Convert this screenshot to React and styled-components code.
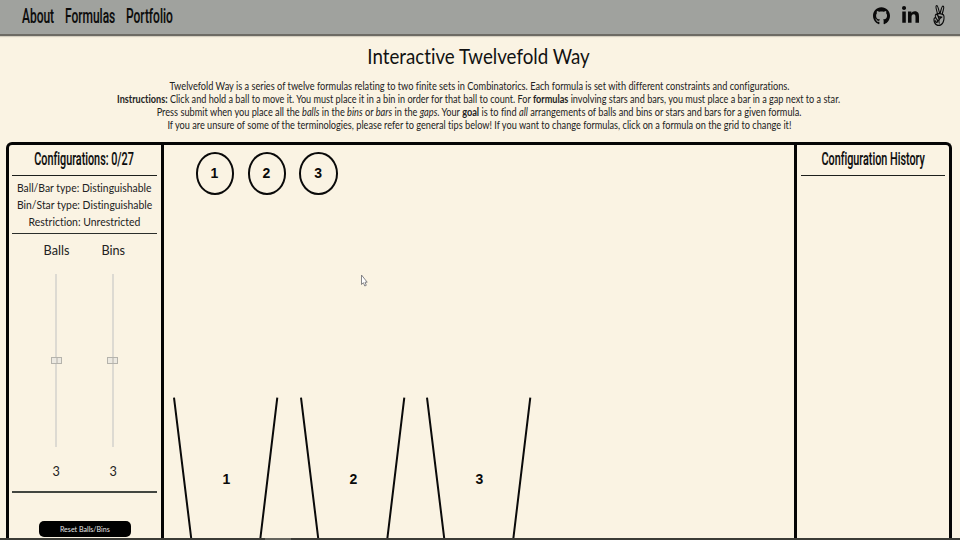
import React from "react";
import styled, { createGlobalStyle } from "styled-components";
import { FaGithub, FaLinkedinIn, FaAngellist } from "react-icons/fa";

const GlobalStyle = createGlobalStyle`
  * { box-sizing: border-box; }
  body { margin: 0; background: #faf3e3; overflow: hidden; }
`;

const Page = styled.div`
  width: 960px;
  height: 540px;
  overflow: hidden;
  display: flex;
  flex-direction: column;
  background: #faf3e3;
  color: #222;
  font-family: "Lato", sans-serif;
  font-variant-ligatures: none;
`;

const Header = styled.header`
  flex: none;
  height: 36px;
  display: flex;
  justify-content: space-between;
  padding: 0 14.5px 0 22px;
  background: #a0a29e;
  border-bottom: 2px solid #6d6b64;
  box-shadow: 0 1px 1px #d5cfc0;
`;

const Nav = styled.nav`
  display: flex;
  height: 34px;
  align-items: center;
`;

const NavItem = styled.a`
  width: ${(p) => p.$width}px;
  white-space: nowrap;
`;

const Condensed = styled.span`
  display: inline-block;
  font-family: "Roboto", sans-serif;
  font-weight: 500;
  font-size: ${(p) => p.$size}px;
  line-height: 22px;
  color: #0c0c0c;
  white-space: nowrap;
  transform: scaleX(0.614);
  transform-origin: ${(p) => p.$origin || "center"} center;
  -webkit-text-stroke: 0.15px #0c0c0c;
`;

const Social = styled.div`
  display: flex;
  height: 31px;
  align-items: center;
  gap: 12.5px;
  color: #0a0a0a;
`;

const SocialIcon = styled.svg`
  display: block;
  width: ${(p) => p.$width}px;
  height: ${(p) => p.$height}px;
`;

const Intro = styled.section`
  flex: none;
  width: 958px;
  height: 106px;
  display: flex;
  flex-direction: column;
  align-items: center;
  text-align: center;
`;

const Title = styled.h1`
  margin: 8px 0 11.6px;
  font-size: 20.8px;
  font-weight: 400;
  line-height: 24px;
  color: #111;
  transform: scaleX(0.9);
`;

const Line = styled.p`
  margin: 0;
  font-size: 10.5px;
  line-height: 13.3px;
  white-space: nowrap;
  transform: scaleX(${(p) => p.$fit});
`;

const Frame = styled.main`
  flex: none;
  width: 946px;
  height: 396px;
  margin-left: 6px;
  display: grid;
  grid-template-columns: 152px 1fr 152px;
  border: 3px solid #050505;
  border-bottom: 0;
  border-radius: 6px 6px 0 0;
`;

const Side = styled.aside`
  display: flex;
  flex-direction: column;
  align-items: center;
  padding: ${(p) => (p.$right ? "0 4px" : "0 4px 0 3px")};
`;

const PanelTitle = styled.div`
  height: 31px;
  width: 100%;
  display: flex;
  justify-content: center;
  padding-top: 3px;
  border-bottom: 1.5px solid #1c1f1c;
`;

const Facts = styled.div`
  width: 100%;
  height: 58px;
  padding-top: 3px;
  display: flex;
  flex-direction: column;
  align-items: center;
  border-bottom: 1.5px solid #2b2e2b;
`;

const Label = styled.span`
  font-size: ${(p) => p.$size}px;
  line-height: 17.2px;
  white-space: nowrap;
  transform: scaleX(0.895);
`;

const Sliders = styled.div`
  width: 100%;
  height: 259px;
  padding: 7px 16px 0 16px;
  display: grid;
  grid-template-columns: 1fr 1fr;
  border-bottom: 2px solid #424640;
`;

const SliderColumn = styled.div`
  display: flex;
  flex-direction: column;
  align-items: center;
`;

const Track = styled.div`
  width: 2px;
  height: 173px;
  margin: 16px 0 15px;
  display: flex;
  align-items: center;
  justify-content: center;
  background: #dddad2;
`;

const Thumb = styled.div`
  flex: none;
  width: 11px;
  height: 7px;
  border: 1px solid #b5b3ac;
  background: linear-gradient(90deg, #ece9e1 4px, #cfccc5 4px, #cfccc5 6px, #ece9e1 6px);
`;

const ResetButton = styled.button`
  width: 92px;
  height: 16px;
  margin-top: 28px;
  padding: 1px 0 0;
  display: flex;
  align-items: center;
  justify-content: center;
  border: 0;
  border-radius: 5px;
  background: #000;
  color: #e6e6e6;
  font-family: inherit;
`;

const Board = styled.section`
  position: relative;
  display: flex;
  flex-direction: column;
  justify-content: space-between;
  border-left: 3px solid #050505;
  border-right: 3px solid #050505;
`;

const Balls = styled.div`
  display: flex;
  gap: 13.3px;
  padding: 7.3px 0 0 31.7px;
`;

const Ball = styled.div`
  width: 38.6px;
  height: 42.6px;
  display: flex;
  align-items: center;
  justify-content: center;
  padding: 0 1px 1px 0;
  border: 2px solid #0a0a0a;
  border-radius: 50%;
  font: 700 14px "Liberation Sans", sans-serif;
  color: #0a0a0a;
`;

const Bins = styled.div`
  display: flex;
  padding-left: 8px;
`;

const BinShape = styled.svg`
  display: block;
  width: 126.7px;
  height: 142px;

  path { fill: none; stroke: #0a0a0a; stroke-width: 2; }
  text { font: 700 14px "Liberation Sans", sans-serif; fill: #0a0a0a; text-anchor: middle; }
`;

const Pointer = styled.svg`
  position: absolute;
  left: 195px;
  top: 129px;
  width: 9px;
  height: 13px;
`;

const Footer = styled.footer`
  flex: none;
  height: 2px;
  background: linear-gradient(90deg, #3b3b36 265px, #65655e 265px, #65655e 291px, #3b3b36 291px);
`;

function Slider({ name, value }) {
  return (
    <SliderColumn>
      <Label $size={14.2}>{name}</Label>
      <Track><Thumb /></Track>
      <Label $size={14.2}>{value}</Label>
    </SliderColumn>
  );
}

function Bin({ label }) {
  return (
    <BinShape viewBox="0 0 126.7 142">
      <path d="M2 1.5L19.3 143M105.3 1.5L88.3 143" />
      <text x="54.3" y="88">{label}</text>
    </BinShape>
  );
}

export default function App() {
  return (
    <>
      <GlobalStyle />
      <Page>
        <Header>
          <Nav>
            <NavItem $width={43}><Condensed $size={19.5} $origin="left">About</Condensed></NavItem>
            <NavItem $width={60.5}><Condensed $size={19.5} $origin="left">Formulas</Condensed></NavItem>
            <NavItem $width={50}><Condensed $size={19.5} $origin="left">Portfolio</Condensed></NavItem>
          </Nav>
          <Social>
            <SocialIcon as={FaGithub} preserveAspectRatio="none" $width={17} $height={18} />
            <SocialIcon as={FaLinkedinIn} preserveAspectRatio="none" $width={17} $height={19} />
            <SocialIcon as={FaAngellist} preserveAspectRatio="none" $width={14} $height={21} />
          </Social>
        </Header>
        <Intro>
          <Title>Interactive Twelvefold Way</Title>
          <Line $fit={0.877}>
            Twelvefold Way is a series of twelve formulas relating to two finite sets in Combinatorics. Each formula is set with different constraints and configurations.
          </Line>
          <Line $fit={0.868}>
            <b>Instructions:</b> Click and hold a ball to move it. You must place it in a bin in order for that ball to count. For <b>formulas</b> involving stars and bars, you must place a bar in a gap next to a star.
          </Line>
          <Line $fit={0.876}>
            Press submit when you place all the <i>balls</i> in the <i>bins</i> or <i>bars</i> in the <i>gaps</i>. Your <b>goal</b> is to find <i>all</i> arrangements of balls and bins or stars and bars for a given formula.
          </Line>
          <Line $fit={0.873}>
            If you are unsure of some of the terminologies, please refer to general tips below! If you want to change formulas, click on a formula on the grid to change it!
          </Line>
        </Intro>
        <Frame>
          <Side>
            <PanelTitle><Condensed $size={17.6}>Configurations: 0/27</Condensed></PanelTitle>
            <Facts>
              <Label $size={11.6}>Ball/Bar type: Distinguishable</Label>
              <Label $size={11.6}>Bin/Star type: Distinguishable</Label>
              <Label $size={11.7}>Restriction: Unrestricted</Label>
            </Facts>
            <Sliders>
              <Slider name="Balls" value="3" />
              <Slider name="Bins" value="3" />
            </Sliders>
            <ResetButton><Label $size={7.9}>Reset Balls/Bins</Label></ResetButton>
          </Side>
          <Board>
            <Balls>
              <Ball>1</Ball>
              <Ball>2</Ball>
              <Ball>3</Ball>
            </Balls>
            <Bins>
              <Bin label="1" />
              <Bin label="2" />
              <Bin label="3" />
            </Bins>
            <Pointer viewBox="0 0 9 13">
              <path d="M2.5 1V10.5L4.4 8.7L5.8 12L7.3 11.3L6 8.2H8.2Z" fill="#fff" stroke="#77777c" strokeWidth=".9" />
            </Pointer>
          </Board>
          <Side $right>
            <PanelTitle><Condensed $size={17.6}>Configuration History</Condensed></PanelTitle>
          </Side>
        </Frame>
        <Footer />
      </Page>
    </>
  );
}
